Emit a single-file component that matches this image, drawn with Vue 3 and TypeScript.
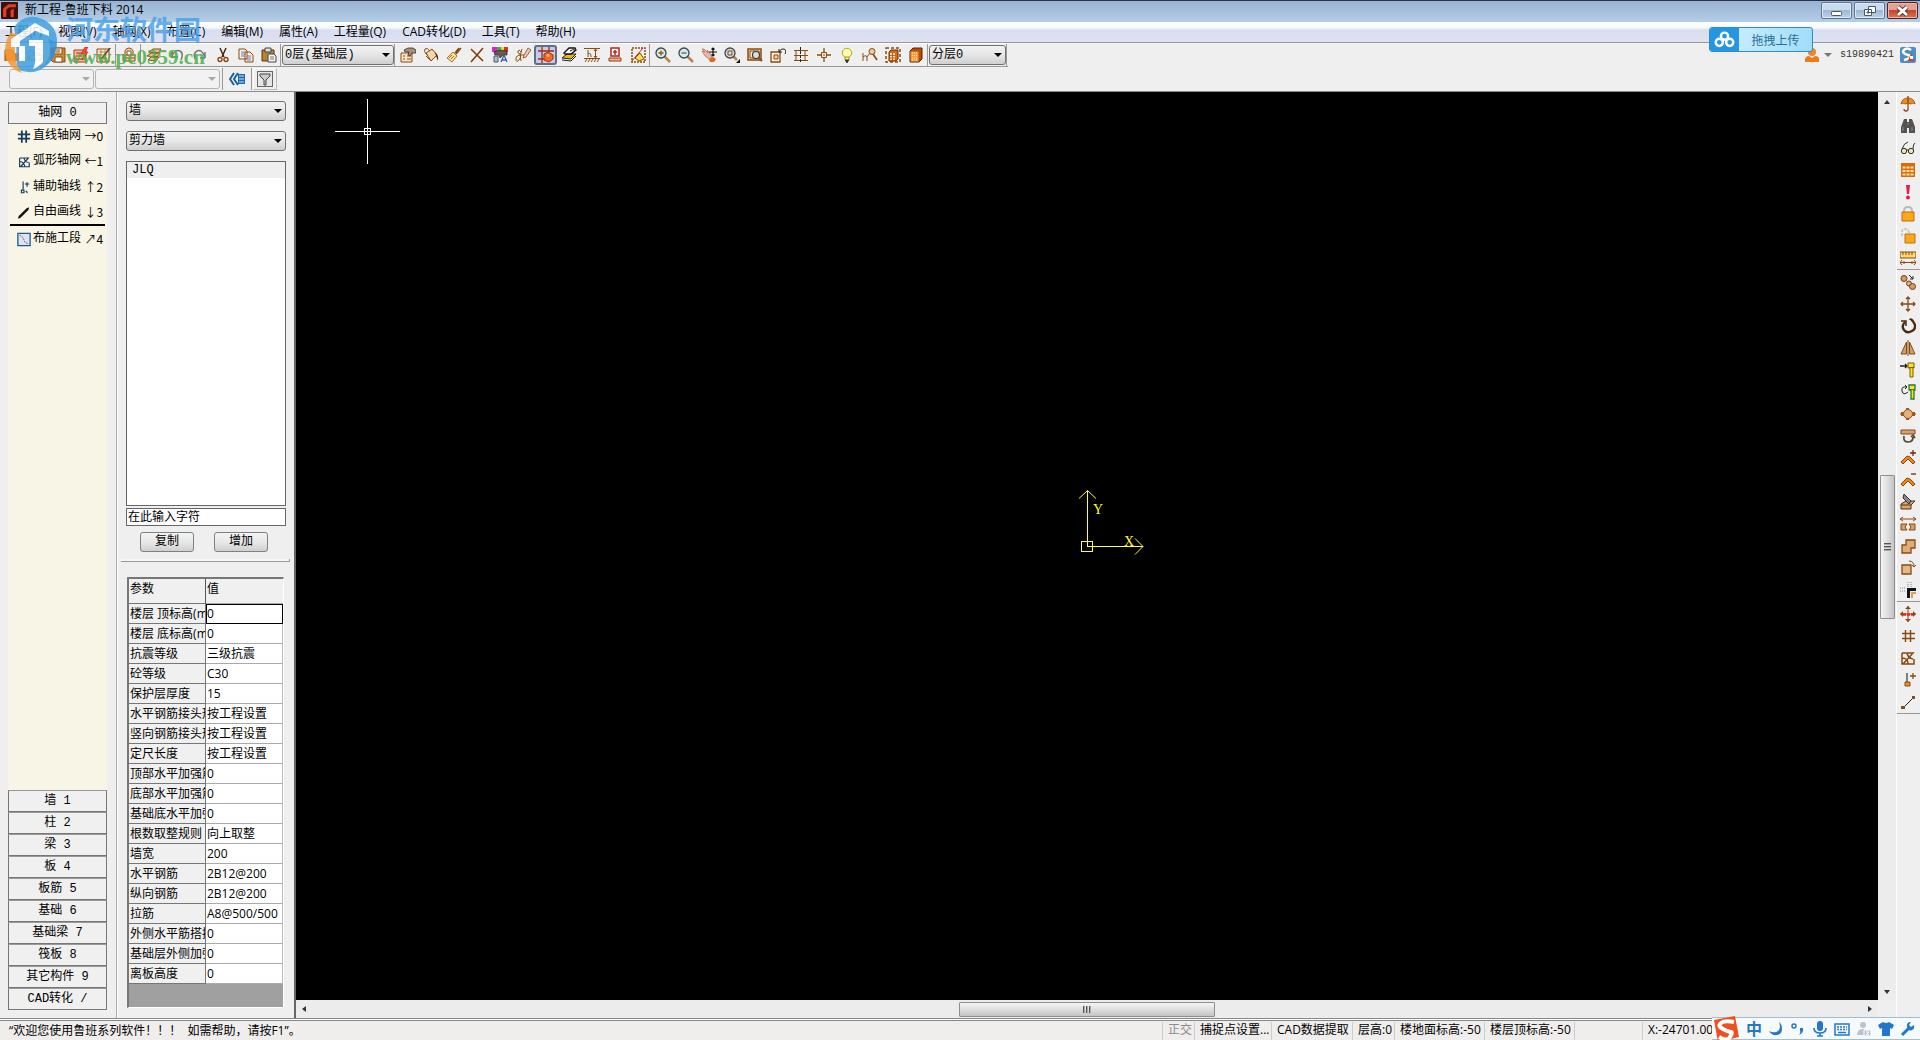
<script setup lang="ts">
import { ref } from 'vue'

interface Tool { id: string; label: string; active?: boolean }
const t = (id: string, label: string, active = false): Tool => ({ id, label, active })

const B = '#8a4b12'

// Glyph markup for 16 x 16 tool icons
const glyphs: Record<string, string> = {
  newFile: `<path d="M1 3h7l2 2v1h6v8H1z" fill="#ef7d10"/><path d="M1 14V3h7l2 2" fill="none" stroke="#9a4c08"/>`,
  open: `<path d="M1 13V4h5l1 2h6v2M1 13l3-5h12l-3 5z" fill="#f3e6cf" stroke="#b98a56"/><path d="M9 3q3-3 5 1" fill="none" stroke="#777"/>`,
  save: `<path d="M1 1h14v14H3l-2-2z" fill="#d8862c" stroke="${B}"/><path d="M4 1h8v6H4z" fill="#fff3dd" stroke="${B}"/><path d="M5 10h7v5H5z" fill="#fff" stroke="${B}"/><path d="M6 3h4M6 5h4" stroke="${B}"/>`,
  saveAs: `<path d="M1 3h12v12H1z" fill="#f0c79b" stroke="#c02a1a"/><path d="M3 6h7M3 9h6M3 12h8" stroke="#a02a18"/><path d="M12 0l-4 7h3l-2 6 6-8h-3l3-5z" fill="#ff4a3a" stroke="#c01818" stroke-width=".6"/>`,
  edit: `<path d="M1 2h12v13H1z" fill="#f8e9cf" stroke="${B}"/><path d="M3 5h8M3 8h8M3 11h8M5 2v13M9 2v13" stroke="#c98a4a"/><path d="M15 1l-8 10-2 2 1-3 7-9z" fill="#444"/>`,
  seal: `<path d="M4 7V4q1-3 4-3t4 3v3M2 8h12v6H2z" fill="#f0ddc0" stroke="${B}"/><path d="M2 11h12M6 4h4v4H6z" stroke="${B}" fill="#fff"/>`,
  layers: `<path d="M3 5l4-3h8l-3 4zM1 9l4-3h9l-3 4zM2 13l3-3h8l-3 4z" fill="#e4c48b" stroke="${B}"/>`,
  undo: `<path d="M3 10V4M3 10h6M3 9q3-7 8-5 4 2 1 9" fill="none" stroke="#777" stroke-width="1.5"/>`,
  redo: `<path d="M13 11V5M13 11H8M13 10Q10 2 5 4 1 6 3 12" fill="none" stroke="#777" stroke-width="1.5"/>`,
  cut: `<path d="M5 1l4 9M11 1L7 10" stroke="#3b2108" stroke-width="1.4"/><circle cx="5" cy="12.500" r="2" fill="none" stroke="${B}" stroke-width="1.400"/><circle cx="11" cy="12.500" r="2" fill="none" stroke="${B}" stroke-width="1.400"/>`,
  copy: `<path d="M1 2h6l2 2v8H1zM7 5h5l3 3v7H7z" fill="#f7f2e8" stroke="${B}"/><path d="M3 5h4M3 7h4M3 9h4M9 9h4M9 11h4M9 13h4" stroke="#7a7aa0"/>`,
  paste: `<path d="M1 3h12v11H1z" fill="#b98334" stroke="#5a370c"/><path d="M4 1h6v4H4z" fill="#ddd" stroke="#444"/><path d="M7 7h6l2 2v6H7z" fill="#f5f5f8" stroke="#444"/><path d="M9 10h4M9 12h4" stroke="#777"/>`,
  props: `<path d="M1 6h11v9H1z" fill="#fbe6c4" stroke="${B}"/><path d="M3 9h2M7 9h4M3 12h2M7 12h4" stroke="${B}"/><path d="M4 3l4-2h5l3 2v3h-4l-2 3-2-1 1-3H5z" fill="#a38e80" stroke="#3c2a20" stroke-width=".8"/>`,
  bucket: `<path d="M3 6l6-4 5 6-6 6z" fill="#f0d5ae" stroke="${B}"/><path d="M4 8Q0 4 2 2t5 2M3 9l4 4" fill="none" stroke="${B}"/><path d="M12 5q4 3 3 9l-2-5z" fill="#5b2a08"/>`,
  brush: `<path d="M15 1l-5 6M13 1l-4 5" stroke="${B}" stroke-width="1.500"/><path d="M7 5l4 4-5 6-5-4z" fill="#f3e0a0" stroke="#a8741c"/><path d="M3 11l3-3M5 12l3-3" stroke="#a8741c"/>`,
  remove: `<path d="M2 2l12 12M14 1L2 15" stroke="#7c3a0a" stroke-width="1.500"/>`,
  palette: `<path d="M0 0h5v5H0z" fill="#e020d0"/><path d="M5 0h4v4H5z" fill="#30c040"/><path d="M9 0h3v4H9z" fill="#f0e020"/><path d="M12 0h4v5h-4z" fill="#e03020"/><path d="M2 5l6-2 7 1v4h-4l-3 3-1-3H3z" fill="#6b5650" stroke="#222" stroke-width=".7"/><path d="M2 9h4v6H2z" fill="#9cc7c0" stroke="#557"/><path d="M9 15l3-7 3 7M10 13h4" fill="none" stroke="#3b5fa0" stroke-width="1.300"/>`,
  script: `<path d="M6 5Q4 2 3 4t2 3q2 3-1 6t-3-1 5-4h3M7 2Q4 9 6 14" fill="none" stroke="${B}"/><path d="M9 8l4-7 3 2-5 7-3 1z" fill="#ecc7b8" stroke="${B}" stroke-width=".8"/>`,
  snapNode: `<path d="M4 0v16M0 4h16M11 0v5M0 12h8" stroke="#9b2d12" stroke-width="1.300"/><path d="M6 7l4-2 5 3v4l-4 3-5-2z" fill="#f26a22" stroke="#a52f08"/><circle cx="10" cy="8.500" r="1.500" fill="#ffb58a"/>`,
  slab: `<path d="M1 11l5-4h9l-5 5z" fill="#f5b400" stroke="#222"/><path d="M1 13l9 1 5-5" fill="none" stroke="#222"/><path d="M3 6l5-5h6l1 2-5 4H4z" fill="#fff" stroke="#111" stroke-width="1.300"/><path d="M9 4q3-2 5-1" stroke="#111" fill="none"/>`,
  height: `<path d="M0 1.500h16M0 11.500h16" stroke="${B}"/><path d="M1 15l2-3M4 15l2-3M7 15l2-3M10 15l2-3M13 15l2-3M4 3v7M4 7q3-2 3 3M11.500 3v7M10 4l1.500-2L13 4M10 9l1.500 2L13 9" stroke="${B}" fill="none"/>`,
  stamp: `<path d="M4 1h8v8H4z" fill="#fff" stroke="#b3261a" stroke-width="1.500"/><path d="M6 5h4M8 3v5" stroke="#b3261a" stroke-width="1.500"/><path d="M2 11h12v3H2z" fill="#e9b98e" stroke="#9b3a12"/>`,
  region: `<path d="M2 1h13v14H2z" fill="none" stroke="${B}" stroke-width="1.500" stroke-dasharray="2 1"/><path d="M1 15L13 1" stroke="#c22"/><path d="M5 11l5-5 4 6-5 2z" fill="#ffe14a" stroke="#75500a"/>`,
  zoomIn: `<path d="M9.500 9.500L15 15" stroke="#b78254" stroke-width="2.500"/><circle cx="6" cy="6" r="5" fill="#dbe7ec" stroke="#3a4650" stroke-width="1.300"/><path d="M3.500 6h5M6 3.500v5" stroke="#7a6200" stroke-width="1.300"/>`,
  zoomOut: `<path d="M9.500 9.500L15 15" stroke="#b78254" stroke-width="2.500"/><circle cx="6" cy="6" r="5" fill="#dbe7ec" stroke="#3a4650" stroke-width="1.300"/><path d="M3.500 6h5" stroke="#36707a" stroke-width="1.300"/>`,
  pan: `<path d="M1 2l3 3-3-1 3 5 4 3 3-2-3-5-2-2 1 3-4-4z" fill="#eab5a4" stroke="#b0685a" stroke-width=".7"/><path d="M8 12l4-2 3 2-2 3H9z" fill="#e4641c"/><path d="M12 1v8M8 5h8M10.500 2.500L12 1l1.500 1.500M10.500 7.500L12 9l1.500-1.500" stroke="#111" stroke-width="1.200" fill="none"/>`,
  zoomWin: `<path d="M9 9l4 4" stroke="#b78254" stroke-width="2.500"/><circle cx="6" cy="6" r="5" fill="#d5dade" stroke="#3a4650" stroke-width="1.300"/><path d="M4 4h4v4H4z" fill="none" stroke="${B}"/><path d="M16 12v4h-4z" fill="#111"/>`,
  zoomAll: `<path d="M1 2h13v11H1z" fill="#f5d49d" stroke="${B}" stroke-width="1.500"/><path d="M3 4h9v7H3z" fill="#fff0d6" stroke="${B}"/><circle cx="9" cy="8" r="3.500" fill="#d7dfe2" stroke="#3c3c3c" stroke-width="1.200"/><path d="M11.500 10.500L15 14" stroke="#8a4b12" stroke-width="2"/>`,
  zoomPrev: `<path d="M1 5h9v10H1z" fill="#fff2dc" stroke="${B}" stroke-width="1.300"/><path d="M4 8h4v4H4z" fill="#f0d0a6" stroke="${B}"/><path d="M9 2v3h3M9 5q2-4 5-3t1 5" fill="none" stroke="#222"/>`,
  floors: `<path d="M1 3.500h14M1 8.500h14M1 13.500h14M3 4v4M12 4v4M3 9v4M12 9v4" stroke="${B}"/><path d="M7.500 0v16" stroke="#222" stroke-dasharray="3 1"/>`,
  origin: `<path d="M8 1v14M1 8h14" stroke="${B}" stroke-width="1.300"/><path d="M5.500 5.500h5v5h-5z" fill="#fff0e0" stroke="${B}"/><path d="M8 7v2" stroke="#c22"/>`,
  bulb: `<circle cx="8" cy="6" r="4.700" fill="#ffffb0" stroke="#b6a51a"/><path d="M6 10h4v3H6z" fill="#ffe97a" stroke="#a39a20"/><path d="M6 13.500h4M7 15h2" stroke="#234" stroke-width="1.500"/>`,
  measure: `<path d="M1 6v8M1 10q4-3 4 1v3M5 10l3-4" fill="none" stroke="${B}"/><circle cx="10" cy="4.500" r="3" fill="#eec9a5" stroke="${B}"/><path d="M11 7l4 6" stroke="${B}" stroke-width="1.700"/>`,
  model: `<path d="M1 1h14v14H1z" fill="none" stroke="${B}" stroke-width="1.500" stroke-dasharray="3 2"/><path d="M4 5l2-2h7v9l-2 2H4z" fill="#d96a1a" stroke="#6e2f06"/><path d="M5 6h5v7H5z" fill="#fbd9b4"/><path d="M7.500 6v7M5 8.500h5M5 11h5" stroke="#c2641c"/>`,
  building: `<path d="M2 4l3-3h9v11l-3 3H2z" fill="#b24c08" stroke="#5f2604"/><path d="M2.500 4.500h8v10h-8z" fill="#f59b3e"/><path d="M4 6h6M4 8.500h6M4 11h6M4 13h6" stroke="#fff0c8" stroke-dasharray="1 1"/>`,
  umbrella: `<path d="M1 8Q2 2 8 2t7 6l-2-1-2 1-3-1-3 1-2-1z" fill="#f08a1c" stroke="#9b4a08" stroke-width=".8"/><path d="M8 0v13q0 2-2 2t-2-2" fill="none" stroke="#8a4b12" stroke-width="1.300"/>`,
  binoculars: `<path d="M4 1h3v3h2V1h3l3 8v6H9v-5H7v5H1V9z" fill="#565250"/><path d="M3 9v4M12 9v4M7 6h2" stroke="#97918c"/>`,
  glasses: `<circle cx="4" cy="11" r="2.700" fill="#f1e1b8" stroke="#332"/><circle cx="11" cy="11" r="2.700" fill="#f1e1b8" stroke="#332"/><path d="M6.500 10h2M2 9Q4 3 8 2M13 9q0-5 2-6" fill="none" stroke="#332"/>`,
  sheet: `<path d="M1 1h14v14H1z" fill="#d96c0c"/><path d="M2.500 4.500h3v2h-3zM6.500 4.500h3v2h-3zM10.500 4.500h3v2h-3zM2.500 8h3v2h-3zM6.500 8h3v2h-3zM10.500 8h3v2h-3zM2.500 11.500h3v2h-3zM6.500 11.500h3v2h-3zM10.500 11.500h3v2h-3z" fill="#ffe2a0"/>`,
  alert: `<path d="M6 1h4l-1 9H7z" fill="#e8174c"/><circle cx="8" cy="13.500" r="2" fill="#e8174c"/>`,
  lock: `<path d="M4 7V5q0-4 4-4t4 4v2" fill="none" stroke="#bbb" stroke-width="2"/><path d="M2 6h12v9H2z" fill="#ffa51a" stroke="#b5740e"/>`,
  unlock: `<path d="M2 8V4q0-3 3-3t4 3v2" fill="none" stroke="#c0c0c0" stroke-width="1.500" stroke-dasharray="3 1"/><path d="M5 6h10v9H5z" fill="#ffa51a" stroke="#b5740e"/>`,
  ruler: `<path d="M0 2h16v6H0z" fill="#ffd76a" stroke="${B}"/><path d="M3 2v3M6 2v3M9 2v3M12 2v3" stroke="${B}"/><path d="M0 12.500h16M2 10l-2 2.500L2 15M14 10l2 2.500-2 2.500M4 11v3M12 11v3" stroke="${B}" fill="none"/>`,
  clone: `<circle cx="4" cy="4.500" r="3" fill="#d99b62" stroke="#6d3c10"/><circle cx="9" cy="9.500" r="2.500" fill="#e0b184" stroke="#6d3c10"/><circle cx="12.500" cy="12.500" r="3" fill="#d99b62" stroke="#6d3c10"/><path d="M9 1l4 4M13 2v3h-3" stroke="#222" fill="none"/>`,
  move: `<path d="M8 1v14M1 8h14M6 3l2-2 2 2M6 13l2 2 2-2M3 6L1 8l2 2M13 6l2 2-2 2" fill="none" stroke="${B}" stroke-width="1.300"/>`,
  rotate: `<path d="M5 4Q1 8 4 12t8 1 2-8-4-3" fill="none" stroke="#4a2a10" stroke-width="2.300"/><path d="M1 3h5v5" fill="none" stroke="#4a2a10" stroke-width="1.500"/>`,
  mirror: `<path d="M6.500 2v12H1zM9.500 2v12H15z" fill="#cf9c6e" stroke="${B}"/><path d="M8 0v16" stroke="${B}"/>`,
  extend: `<path d="M0 4h7M5 2l2 2-2 2" stroke="#222" fill="none" stroke-width="1.300"/><path d="M8 1h6v5h-1v9h-3V6H8z" fill="#ffe21a" stroke="#7c5a00"/><path d="M9 5.500h5" stroke="#7c5a00"/>`,
  trim: `<path d="M7 3Q1 2 2 7t6 1M5 1l2 2-2 2" stroke="#222" fill="none"/><path d="M9 1h6v5h-1v9h-3V6H9z" fill="#ffe21a" stroke="#247a38" stroke-width="1.300"/><path d="M10 5.500h4" stroke="#247a38"/>`,
  divide: `<path d="M0 8h16" stroke="${B}"/><circle cx="8" cy="8" r="4.500" fill="#e2b283" stroke="${B}"/><path d="M1 6h3v4H1zM12 6h3v4h-3zM6 2h3v2H6zM6 12h3v2H6z" fill="#a8550f"/>`,
  swap: `<path d="M1 2h14v4H1z" fill="#d9a06a" stroke="${B}"/><path d="M4 8q-1 6 4 6t5-5M11 9l2-2 2 3" fill="none" stroke="#4c4b38" stroke-width="1.700"/>`,
  vertexAdd: `<path d="M1 12l6-6 3 1 5 5-2 2-5-5-5 5z" fill="#f0831a" stroke="#9d4205"/><path d="M10 3h6M13 0v6" stroke="#6d2d08" stroke-width="1.300"/>`,
  vertexDel: `<path d="M1 12l6-6 3 1 5 5-2 2-5-5-5 5z" fill="#f0831a" stroke="#9d4205"/><path d="M11 2h5" stroke="#6d2d08" stroke-width="1.300"/>`,
  split: `<path d="M1 10l5-3h9l-4 4v4H1z" fill="#d9a672" stroke="#54300e"/><path d="M1 11h10" stroke="#54300e"/><path d="M4 0l7 7-2 3-6-6z" fill="#888" stroke="#333"/>`,
  stretch: `<path d="M0 3h16M3 1L0 3l3 2M13 1l3 2-3 2" fill="none" stroke="${B}"/><path d="M1 8h6l-2 3 2 3H1zM9 8h6v6H9l2-3z" fill="#d8a06a" stroke="${B}"/>`,
  combine: `<path d="M6 2h9v8h-4v5H2V7h4z" fill="#dfad78" stroke="${B}" stroke-width="1.300"/>`,
  turn: `<path d="M2 5h9v9H2z" fill="#e5b887" stroke="${B}" stroke-width="1.300"/><path d="M9 1q5 0 5 6M12 5l2 2 2-2" fill="none" stroke="${B}"/>`,
  corner: `<path d="M7 16V6h9v3h-6v7z" fill="#17120d"/><path d="M12 16v-5h4" stroke="#e0a050" fill="none" stroke-width="2"/><path d="M0 6h6M0 9h6M8 0v5M11 0v5" stroke="#888" stroke-dasharray="1 1"/>`,
  moveNode: `<path d="M8 0v16M0 8h16" stroke="${B}"/><path d="M5 3l3-3 3 3zM5 13l3 3 3-3zM3 5L0 8l3 3zM13 5l3 3-3 3z" fill="${B}"/><path d="M3 8.500h10" stroke="#e22" stroke-width="2.500" stroke-dasharray="3 1"/>`,
  grid: `<path d="M5.500 2v12M10.500 2v12M2 5.500h13M2 10.500h13" stroke="${B}" stroke-width="1.500"/>`,
  arcGrid: `<path d="M2 3v11h12V9M2 3h11L3 14M2 8q6 0 6 6M7 3q1 5 6 6" fill="none" stroke="${B}" stroke-width="1.500"/>`,
  aux: `<path d="M7 1v9" stroke="#111"/><path d="M5 10h5v4H5z" fill="#ee8a24" stroke="${B}"/><path d="M10 4h6M13 1v6" stroke="${B}" stroke-width="1.300"/>`,
  line: `<path d="M3 14L14 3" stroke="#222"/><path d="M1 12h4v3H1zM12 2h3v3h-3z" fill="${B}"/>`,
  navyGrid: `<path d="M5.500 1v14M10.500 1v14M1 5.500h14M1 10.500h14" stroke="#123a5c" stroke-width="2"/>`,
  navyArc: `<path d="M3 4v10h11V9M3 4h10L4 14M3 8q5 0 6 6M8 4q1 5 5 5" fill="none" stroke="#123a5c" stroke-width="1.300"/>`,
  navyAux: `<path d="M7 1v9M5 11h3v3H5zM10 12l2 2M9 4h5M11.500 2v5" fill="none" stroke="#123a5c" stroke-width="1.300"/>`,
  navyLine: `<path d="M1 15l3-1 9-9 1-3-3 1-9 9z" fill="#111"/>`,
  section: `<path d="M1 1h14v14H1z" fill="#d8e6f6" stroke="#1f5a92" stroke-width="1.500"/><path d="M3 3l4 3 2 5 4 2" fill="none" stroke="#c33" stroke-dasharray="2 1"/>`,
}

const menus: string[] = ['工程(F)', '视图(V)', '轴网(X)', '布置(C)', '编辑(M)', '属性(A)', '工程量(Q)', 'CAD转化(D)', '工具(T)', '帮助(H)']

const fileTools: Tool[][] = [
  [t('newFile', '新建'), t('open', '打开'), t('save', '保存'), t('saveAs', '另存'), t('edit', '工程设置')],
  [t('seal', '楼层')],
  [t('layers', '复制楼层'), t('undo', '撤销'), t('redo', '重做'), t('cut', '剪切'), t('copy', '复制对象'), t('paste', '粘贴')],
]
const viewTools: Tool[][] = [
  [t('props', '属性'), t('bucket', '填充'), t('brush', '格式刷'), t('remove', '删除'), t('palette', '颜色'), t('script', '编辑'), t('snapNode', '捕捉', true), t('slab', '板'), t('height', '标高'), t('stamp', '标注'), t('region', '区域')],
  [t('zoomIn', '放大'), t('zoomOut', '缩小'), t('pan', '平移'), t('zoomWin', '窗口缩放'), t('zoomAll', '全图'), t('zoomPrev', '上一视图'), t('floors', '楼层显示'), t('origin', '原点'), t('bulb', '显示'), t('measure', '查高度'), t('model', '局部三维'), t('building', '三维')],
]
const sideTools: Tool[][] = [
  [t('umbrella', '云'), t('binoculars', '查找'), t('glasses', '查看'), t('sheet', '表格'), t('alert', '检查'), t('lock', '锁定'), t('unlock', '解锁'), t('ruler', '测量')],
  [t('clone', '复制构件'), t('move', '移动'), t('rotate', '旋转'), t('mirror', '镜像'), t('extend', '延伸'), t('trim', '修剪'), t('divide', '打断'), t('swap', '翻转'), t('vertexAdd', '加顶点'), t('vertexDel', '减顶点'), t('split', '分割'), t('stretch', '拉伸'), t('combine', '合并'), t('turn', '转角'), t('corner', '倒角')],
  [t('moveNode', '移动轴网'), t('grid', '直线轴网工具'), t('arcGrid', '弧形轴网工具'), t('aux', '辅助轴线工具'), t('line', '画线')],
]

const palette = [
  { icon: 'navyGrid', name: '直线轴网', key: '→0' },
  { icon: 'navyArc', name: '弧形轴网', key: '←1' },
  { icon: 'navyAux', name: '辅助轴线', key: '↑2' },
  { icon: 'navyLine', name: '自由画线', key: '↓3' },
  { icon: 'section', name: '布施工段', key: '↗4' },
]
const categories: string[] = ['墙 1', '柱 2', '梁 3', '板 4', '板筋 5', '基础 6', '基础梁 7', '筏板 8', '其它构件 9', 'CAD转化 /']

const params: [string, string][] = [
  ['楼层 顶标高(mm)', '0'], ['楼层 底标高(mm)', '0'], ['抗震等级', '三级抗震'], ['砼等级', 'C30'],
  ['保护层厚度', '15'], ['水平钢筋接头形式', '按工程设置'], ['竖向钢筋接头形式', '按工程设置'],
  ['定尺长度', '按工程设置'], ['顶部水平加强筋', '0'], ['底部水平加强筋', '0'], ['基础底水平加强筋', '0'],
  ['根数取整规则', '向上取整'], ['墙宽', '200'], ['水平钢筋', '2B12@200'], ['纵向钢筋', '2B12@200'],
  ['拉筋', 'A8@500/500'], ['外侧水平筋搭接', '0'], ['基础层外侧加强', '0'], ['离板高度', '0'],
]
const selectedRow = ref(0)
const keyword = ref('在此输入字符')
</script>

<template>
  <div class="app">
    <header class="titlebar">
      <svg class="app-icon" viewBox="0 0 16 16"><rect width="16" height="16" rx="1" fill="#3a0f0c" /><path d="M2 14V6l5-4h7v3H8L5 7v7zM9 14V8l3-2v8z" fill="#e2401e" /></svg>
      <span class="title">新工程-鲁班下料 2014</span>
      <button class="win" aria-label="最小化"><svg viewBox="0 0 29 14"><rect x="9.500" y="7.500" width="10" height="4" rx="1" fill="#fff" stroke="#4a5668" /></svg></button>
      <button class="win" aria-label="还原"><svg viewBox="0 0 29 14"><path d="M13.500 2.500h7v6h-7zM9.500 5.500h7v6h-7z" fill="#fff" stroke="#4a5668" /><path d="M12 8h2v1h-2z" fill="#8aa" stroke="#4a5668" /></svg></button>
      <button class="win close" aria-label="关闭"><svg viewBox="0 0 29 14"><path d="M10 3l9 8M19 3l-9 8" stroke="#5b2a2a" stroke-width="4.500" /><path d="M10 3l9 8M19 3l-9 8" stroke="#fff" stroke-width="3" /></svg></button>
    </header>

    <nav class="menubar">
      <a v-for="m in menus" :key="m" href="#">{{ m }}</a>
    </nav>

    <div class="toolbar">
      <div class="tools">
        <div v-for="(g, i) in fileTools" :key="i" class="group">
          <button v-for="b in g" :key="b.id" class="tool" :aria-label="b.label"><svg viewBox="0 0 16 16" v-html="glyphs[b.id]" /></button>
        </div>
        <div class="group">
          <span class="combo floor"><select aria-label="楼层选择"><option>0层(基础层)</option></select></span>
        </div>
        <div v-for="(g, i) in viewTools" :key="'v' + i" class="group">
          <button v-for="b in g" :key="b.id" class="tool" :class="{ active: b.active }" :aria-label="b.label"><svg viewBox="0 0 16 16" v-html="glyphs[b.id]" /></button>
        </div>
        <div class="group">
          <span class="combo layer"><select aria-label="分层选择"><option>分层0</option></select></span>
        </div>
      </div>
      <div class="account">
        <svg class="person" viewBox="0 0 16 16"><circle cx="8" cy="5" r="4" fill="#f08428" /><path d="M1 15v-3q1-3 4-3l3 2 3-2q4 0 4 3v3z" fill="#ee7a1c" /></svg>
        <i class="caret"></i>
        <span class="user">s19890421</span>
        <svg class="service" viewBox="0 0 16 16"><rect width="16" height="16" rx="2" fill="#4b8fc6" /><path d="M11 3Q7 0 4 3t4 5-4 5" fill="none" stroke="#fff" stroke-width="2.500" /><path d="M11 6l3 8H8z" fill="#e0382a" /><path d="M10 9h3v3h-3z" fill="#fff" /></svg>
      </div>
    </div>

    <div class="toolbar second">
      <span class="combo off name"><select aria-label="类型" disabled></select></span>
      <span class="combo off kind"><select aria-label="名称" disabled></select></span>
      <button class="tool collapse" aria-label="收起"><svg viewBox="0 0 17 16"><path d="M5 2L1 8l4 6M9 2L5 8l4 6" fill="none" stroke="#1d5f9e" stroke-width="2" /><path d="M9 3h7v10H9z" fill="#1c6bb0" /><path d="M10 5h5M10 8h5M10 11h5" stroke="#cde5fa" /></svg></button>
      <button class="tool filter" aria-label="过滤"><svg viewBox="0 0 16 16"><rect x=".5" y=".5" width="15" height="15" fill="#e6e6e6" stroke="#666" /><path d="M3 3h10v2l-4 4v5H7V9L3 5z" fill="#ccc" stroke="#444" /></svg></button>
    </div>

    <main class="body">
      <aside class="palette">
        <button class="cat">轴网 0</button>
        <ul class="items">
          <li v-for="p in palette" :key="p.name">
            <svg viewBox="0 0 16 16" v-html="glyphs[p.icon]" />
            <span class="label">{{ p.name }}</span><span class="key">{{ p.key }}</span>
          </li>
        </ul>
        <button v-for="c in categories" :key="c" class="cat">{{ c }}</button>
      </aside>

      <aside class="panel">
        <div class="upper">
          <span class="combo"><select aria-label="构件大类"><option>墙</option></select></span>
          <span class="combo"><select aria-label="构件小类"><option>剪力墙</option></select></span>
          <ul class="list"><li>JLQ</li></ul>
          <input v-model="keyword" class="search" aria-label="搜索构件" />
          <div class="actions"><button>复制</button><button>增加</button></div>
        </div>
        <div class="splitter"></div>
        <div class="props">
          <table>
            <thead><tr><th>参数</th><th>值</th></tr></thead>
            <tbody>
              <tr v-for="([n, v], i) in params" :key="n" :class="{ current: i === selectedRow }" @click="selectedRow = i">
                <th scope="row">{{ n }}</th><td>{{ v }}</td>
              </tr>
            </tbody>
          </table>
        </div>
      </aside>

      <section class="workspace">
        <div class="canvas">
          <svg class="cursor" viewBox="0 0 65 65"><path d="M32.500 0v65M0 32.500h65" stroke="#fff" /><rect x="29.500" y="29.500" width="6" height="6" fill="none" stroke="#fff" /></svg>
          <svg class="axes" viewBox="0 0 120 120">
            <g fill="none" stroke="#ff3"><path d="M60.500 60V4.500M52 12.500l8.500-8 8.500 8M60 60.500h56M108 52.500l8 8-8 8" /><rect x="54.500" y="55.500" width="11" height="10" /></g>
            <text x="66" y="28">Y</text><text x="97" y="60">X</text>
          </svg>
        </div>
        <div class="bar vertical"><i class="arrow up"></i><div class="thumb"><b></b><b></b><b></b></div><i class="arrow down"></i></div>
        <div class="bar horizontal"><i class="arrow left"></i><div class="thumb"><b></b><b></b><b></b></div><i class="arrow right"></i></div>
      </section>

      <aside class="side">
        <div v-for="(g, i) in sideTools" :key="i" class="stack">
          <button v-for="b in g" :key="b.id" class="tool" :aria-label="b.label"><svg viewBox="0 0 16 16" v-html="glyphs[b.id]" /></button>
        </div>
      </aside>
    </main>

    <footer class="status">
      <span class="message">“欢迎您使用鲁班系列软件！！！&nbsp; 如需帮助，请按F1”。</span>
      <span class="cell ortho">正交</span>
      <span class="cell snap">捕捉点设置...</span>
      <span class="cell cad">CAD数据提取</span>
      <span class="cell story">层高:0</span>
      <span class="cell level">楼地面标高:-50</span>
      <span class="cell level">楼层顶标高:-50</span>
      <span class="cell blank"></span>
      <span class="cell coord">X:-24701.00</span>
    </footer>

    <button class="upload">
      <span class="cloud"><svg viewBox="0 0 22 18"><g fill="none" stroke="#fff" stroke-width="2.600"><circle cx="11" cy="5.500" r="3.800" /><circle cx="5.500" cy="12" r="3.800" /><circle cx="16.500" cy="12" r="3.800" /></g></svg></span>
      <span class="upload-text">拖拽上传</span>
    </button>

    <div class="watermark">
      <svg class="mark" viewBox="0 0 56 62">
        <path d="M12 14Q24-1 40 6q16 7 15 25-1 17-17 26-12 5-23-1L14 26z" fill="#3fa0e0" />
        <path d="M8 20Q-2 38 8 52q5 6 12 8-8-10-7-24 0-9 3-15z" fill="#f09a3c" />
        <path d="M9 26L33 10l14 8v5L33 18 18 28v5h5v15h-6V34H9zM27 27h14v22q-4 5-10 7 3-6 2-14v-9h-6z" fill="#fff" />
        <path d="M46 26q6 15-6 28 16-7 14-25z" fill="#2f8fd4" />
      </svg>
      <div class="words"><span class="site">河东软件园</span><span class="url">www.pc0359.cn</span></div>
    </div>

    <div class="ime">
      <svg class="sogou" viewBox="0 0 28 28"><path d="M2 5l21-4 4 21-21 5z" fill="#f0501e" /><path d="M22 7Q13 5 9 8t2 6 8 3-1 5-11 0" fill="none" stroke="#fff" stroke-width="4" /></svg>
      <span class="zh">中</span>
      <svg viewBox="0 0 16 16"><path d="M11 1q3 8-3 10-3 1-7-1 3 5 8 4 5-1 5-6 0-5-3-7z" fill="#2277c8" /></svg>
      <svg viewBox="0 0 16 16"><circle cx="4" cy="5" r="2" fill="none" stroke="#2277c8" stroke-width="1.500" /><path d="M10 7h3q1 5-4 7 2-3 1-4z" fill="#2277c8" /></svg>
      <svg viewBox="0 0 16 16"><rect x="5" y="0" width="6" height="10" rx="3" fill="#2277c8" /><path d="M2 7q0 5 6 5t6-5M8 12v3M5 15h6" fill="none" stroke="#2277c8" stroke-width="1.600" /></svg>
      <svg viewBox="0 0 16 16"><rect x="1" y="3" width="14" height="11" fill="none" stroke="#2277c8" stroke-width="1.500" /><path d="M3 6h10M3 8.500h10" stroke="#2277c8" stroke-width="1.500" stroke-dasharray="2 1" /><path d="M4 11.500h8" stroke="#2277c8" stroke-width="1.500" /></svg>
      <svg viewBox="0 0 16 16"><circle cx="7" cy="4" r="3" fill="#b9c2cf" /><path d="M1 14q0-6 6-6l3 1v5z" fill="#b9c2cf" /><path d="M8 9h7v6H8z" fill="#b9c2cf" stroke="#fff" /><path d="M10 11h3l-3 3h3" fill="none" stroke="#fff" /></svg>
      <svg viewBox="0 0 16 16"><path d="M5 1q3 2 6 0l5 3-2 4-2-1v8H4V7L2 8 0 4z" fill="#2277c8" /></svg>
      <svg viewBox="0 0 16 16"><path d="M2 14l7-7" stroke="#2277c8" stroke-width="3" /><path d="M14 4l-3 2-2-2 2-3Q6 1 7 6q2 5 5 3 3-1 2-5z" fill="#2277c8" /></svg>
    </div>
  </div>
</template>

<style>
body { margin: 0; overflow: hidden; }
</style>

<style scoped>
* { box-sizing: border-box; }
.app {
  position: relative;
  display: flex;
  flex-direction: column;
  height: 100vh;
  background: #efefef;
  color: #000;
  font: 12px/16px "Open Sans", "Noto Sans CJK SC", sans-serif;
}
button, select, input { font: inherit; color: inherit; margin: 0; padding: 0; }
ul { list-style: none; margin: 0; padding: 0; }
svg { display: block; }

.titlebar {
  display: flex;
  flex: none;
  align-items: flex-start;
  gap: 2px;
  height: 22px;
  padding: 1px 2px 0 1px;
  border-top: 1px solid #2b3242;
  background: linear-gradient(#98b4d2, #b4cde8);
}
.app-icon { width: 17px; height: 17px; }
.title { flex: 1; padding-left: 5px; }
.win {
  width: 31px;
  height: 17px;
  border: 1px solid #5f7590;
  border-radius: 2px;
  background: linear-gradient(#c9dbee 45%, #9db7d4 50%, #bdd3ea);
  box-shadow: inset 0 0 0 1px #dce8f5;
}
.win svg { width: 29px; height: 14px; }
.close { border-color: #5a2020; background: linear-gradient(#e3a193 45%, #c4452c 50%, #d9765a); box-shadow: inset 0 0 0 1px #eeb5a8; }

.menubar {
  display: flex;
  flex: none;
  gap: 16px;
  height: 21px;
  padding: 2px 5px;
  border-bottom: 1px solid #999;
  background: linear-gradient(#fff 0, #f4f7fb 6px, #d9deef 8px, #dee2f3);
}
.menubar a { color: #000; text-decoration: none; white-space: nowrap; }

.toolbar { display: flex; flex: none; justify-content: space-between; height: 24px; }
.tools { display: flex; border-bottom: 1px solid #999; border-top: 1px solid #fff; }
.group { display: flex; align-items: center; border-right: 1px solid #999; margin-right: 1px; }
.tool { display: flex; align-items: center; justify-content: center; width: 23px; height: 22px; border: 0; background: none; }
.tool svg { width: 16px; height: 16px; }
.active { height: 20px; border: 2px solid #5f6f86; border-radius: 3px; background: #c5cbe9; }

.combo { position: relative; display: block; height: 20px; font-family: "Liberation Mono", "Noto Sans CJK SC", monospace; }
.combo select {
  display: block;
  width: 100%;
  height: 100%;
  padding: 0 2px;
  appearance: none;
  border: 1px solid #707070;
  border-radius: 3px;
  background: linear-gradient(#f2f2f2, #e6e6e6 50%, #cfcfcf);
}
.combo::after {
  content: "";
  position: absolute;
  right: 4px;
  top: 8px;
  border: 4px solid transparent;
  border-top: 4px solid #000;
  border-bottom: 0;
}
.floor { width: 112px; }
.layer { width: 77px; }
.off select { border-color: #b5b5b5; background: #f2f2f2; opacity: 1; }
.off::after { border-top-color: #aaa; }
.name { width: 85px; }
.kind { width: 125px; }

.account { display: flex; align-items: center; padding-right: 4px; font-family: "Liberation Mono", monospace; font-size: 10px; color: #333; }
.person { width: 16px; height: 16px; }
.caret { margin: 0 8px 0 4px; border: 4px solid transparent; border-top: 4px solid #777; border-bottom: 0; }
.user { width: 60px; }
.service { width: 16px; height: 16px; }

.second { justify-content: flex-start; align-items: center; height: 25px; padding-left: 9px; border-bottom: 1px solid #8b8b8b; gap: 1px; }
.collapse { width: 30px; margin-left: 1px; border-left: 1px solid #999; border-right: 1px solid #999; }
.collapse svg { width: 17px; }
.filter { width: 24px; border: 1px solid #bbb; border-top-color: #fff; border-left-color: #fff; }

.body { display: flex; flex: 1; min-height: 0; }
.palette {
  display: flex;
  flex: none;
  flex-direction: column;
  width: 117px;
  padding: 10px 9px 8px 8px;
  border-right: 1px solid #aaa;
  font-family: "Liberation Mono", "Noto Sans CJK SC", monospace;
}
.cat { flex: none; height: 22px; border: 1px solid #777; border-top-color: #999; background: #f0f0f0; }
.items { flex: 1; padding: 0 2px; background: #f8f5e6; }
.items li { display: flex; align-items: center; height: 26px; padding-left: 7px; gap: 2px; white-space: nowrap; }
.items li:first-child { height: 24px; }
.items li:nth-child(4) { border-bottom: 2px solid #000; }
.items svg { width: 15px; height: 15px; }
.label { width: 53px; }
.key { width: 22px; font-family: "Noto Sans CJK SC", sans-serif; }

.panel { display: flex; flex: none; flex-direction: column; width: 179px; border-left: 1px solid #fff; border-right: 2px solid #666; }
.upper { display: flex; flex-direction: column; padding: 9px 8px 7px 8px; font-family: "Liberation Mono", "Noto Sans CJK SC", monospace; }
.upper .combo { margin-bottom: 10px; }
.list { height: 345px; margin-bottom: 2px; border: 1px solid #666; background: #fff; }
.list li { height: 16px; padding-left: 5px; background: #efefef; }
.search { height: 18px; border: 1px solid #666; background: #fff; padding: 0 1px 2px; outline: 0; }
.actions { display: flex; gap: 20px; padding: 6px 14px 0; }
.actions button { width: 54px; height: 20px; border: 1px solid #808080; border-radius: 3px; background: linear-gradient(#f4f4f4, #e8e8e8 50%, #cfcfcf); }
.splitter { height: 3px; margin: 0 4px 0 3px; border-bottom: 1px solid #999; border-right: 1px solid #999; background: #f7f7f7; }
.props {
  flex: 1;
  min-height: 0;
  margin: 15px 10px 10px 9px;
  border-top: 2px solid #777;
  border-left: 2px solid #777;
  border-right: 1px solid #fff;
  border-bottom: 1px solid #fff;
  background: #a0a0a0;
}
table { width: 100%; table-layout: fixed; border-collapse: separate; border-spacing: 0; background: #fff; }
th, td { height: 20px; padding: 0 1px; overflow: hidden; font-weight: 400; text-align: left; white-space: nowrap; line-height: 18px; }
th { border-right: 1px solid #777; border-bottom: 1px solid #777; background: #f0f0f0; }
td { border-bottom: 1px solid #aaa; border-right: 1px solid #bbb; }
thead th { height: 25px; padding-bottom: 4px; border-right-color: #555; }
thead th:last-child { border-right: 0; border-bottom-color: #aaa; }
tbody th { width: 78px; }
.current td { border: 1px solid #000; padding: 0; }

.workspace { display: grid; flex: 1; min-width: 0; grid-template: 1fr 18px / 1fr 18px; }
.canvas { position: relative; background: #000; }
.cursor { position: absolute; left: 39px; top: 7px; width: 65px; height: 65px; }
.axes { position: absolute; left: calc(50% - 60px); top: calc(50% - 60px); width: 120px; height: 120px; }
.axes text { fill: #ff3; font: 14px "Liberation Serif", serif; }
.bar { display: flex; align-items: center; justify-content: space-between; background: #ececec; }
.vertical { flex-direction: column; padding: 8px 0 6px; }
.horizontal { padding: 0 6px 0 6px; }
.thumb { display: flex; align-items: center; justify-content: center; gap: 1px; border: 1px solid #8f8f8f; border-radius: 1px; }
.vertical .thumb { flex-direction: column; width: 15px; height: 144px; background: linear-gradient(90deg, #f5f5f5, #dedede 50%, #c4c4c4); }
.horizontal .thumb { width: 256px; height: 15px; background: linear-gradient(#f5f5f5, #dedede 50%, #c4c4c4); }
.thumb b { background: #555; border: 0 solid #aaa; }
.vertical b { width: 7px; height: 2px; border-bottom-width: 1px; }
.horizontal b { width: 2px; height: 7px; border-right-width: 1px; }
.arrow { border: 3px solid transparent; }
.up { border-bottom: 4px solid #333; border-top: 0; }
.down { border-top: 4px solid #333; border-bottom: 0; }
.left { border-right: 4px solid #333; border-left: 0; }
.right { border-left: 4px solid #333; border-right: 0; }

.side { flex: none; width: 24px; padding-top: 1px; border-left: 1px solid #fff; }
.side .tool { width: 22px; }
.stack { border-bottom: 1px solid #999; margin-bottom: 1px; }

.status { display: flex; flex: none; align-items: center; height: 22px; border-top: 1px solid #888; box-shadow: inset 0 1px #fff, inset 0 2px #888; background: #f0eded; padding-top: 3px; }
.message { flex: 1; padding-left: 9px; white-space: nowrap; }
.cell { flex: none; height: 18px; padding-left: 5px; border-left: 1px solid #ccc; white-space: nowrap; overflow: hidden; }
.ortho { width: 32px; color: #8c8c8c; }
.snap { width: 77px; }
.cad { width: 81px; }
.story { width: 42px; }
.level { width: 90px; }
.blank { width: 68px; }
.coord { width: 278px; }

.upload {
  position: absolute;
  right: 107px;
  top: 27px;
  display: flex;
  width: 104px;
  height: 25px;
  border: 1px solid #2f8ec4;
  border-radius: 3px;
  overflow: hidden;
  background: linear-gradient(100deg, #d5f1fd, #9fdcfa);
}
.cloud { display: flex; align-items: center; justify-content: center; width: 29px; height: 23px; background: #2496e4; }
.cloud svg { width: 21px; height: 17px; }
.upload-text { flex: 1; color: #2b6f96; line-height: 25px; }

.watermark { position: absolute; left: 2px; top: 13px; display: flex; gap: 8px; pointer-events: none; opacity: 0.85; }
.mark { width: 56px; height: 62px; }
.words { display: flex; flex-direction: column; white-space: nowrap; }
.site { font: 700 27px/32px "Noto Sans CJK SC", sans-serif; color: #4da3ea; }
.url { font: 700 21px/24px "Liberation Serif", serif; color: #4fae4a; }

.ime {
  position: absolute;
  right: 0;
  bottom: 0;
  display: flex;
  align-items: center;
  gap: 6px;
  height: 23px;
  padding-right: 4px;
  border-top: 1px solid #9fbcd8;
  border-bottom: 1px solid #9fbcd8;
  background: #f7fafd;
}
.ime svg { width: 16px; height: 16px; }
.ime .sogou { width: 28px; height: 28px; }
.zh { width: 16px; font-size: 16px; font-weight: 700; line-height: 20px; color: #2277c8; }
</style>
